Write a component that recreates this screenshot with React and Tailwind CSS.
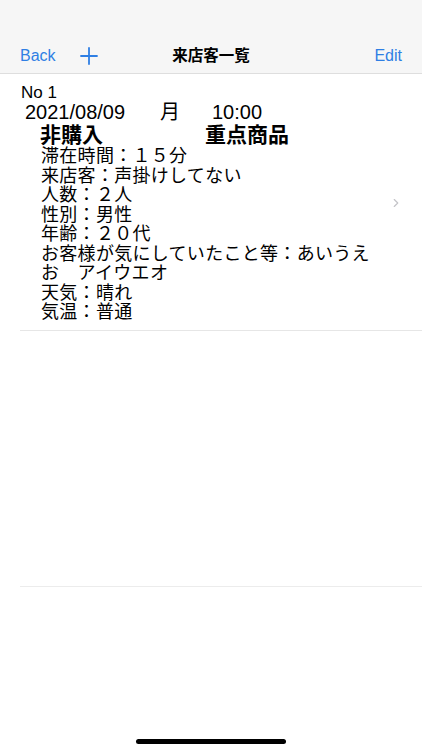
import { ChevronRight } from 'lucide-react';

const font = { fontFamily: '"Liberation Sans", "Noto Sans CJK JP", sans-serif' };

const details = [
  '滞在時間：１５分',
  '来店客：声掛けしてない',
  '人数：２人',
  '性別：男性',
  '年齢：２０代',
  'お客様が気にしていたこと等：あいうえ',
  'お　アイウエオ',
  '天気：晴れ',
  '気温：普通',
];

export default function App() {
  return (
    <div className="w-[422px] h-[750px] bg-white relative overflow-hidden text-black" style={font}>
      {/* Navigation bar */}
      <div className="h-[74px] bg-[#f6f6f6] border-b border-[#dedede] flex items-end pb-[1px] px-5">
        <div className="flex-1 flex items-center h-[32px]">
          <span className="text-[16px] text-[#2f7fe4]">Back</span>
          <svg className="ml-[24px]" width="18" height="18" viewBox="0 0 18 18">
            <path d="M9 1v16M1 9h16" stroke="#2f7fe4" strokeWidth="1.8" strokeLinecap="round" />
          </svg>
        </div>
        <div className="h-[32px] flex items-center text-[15.5px] font-bold">来店客一覧</div>
        <div className="flex-1 flex items-center justify-end h-[32px]">
          <span className="text-[16px] text-[#2f7fe4]">Edit</span>
        </div>
      </div>

      {/* Visitor row */}
      <div className="ml-5 border-b border-[#e6e6e6] flex items-center pt-[9px] pb-[7px]">
        <div className="flex-1">
          <div className="text-[17px] leading-[19px] ml-[1px]">No 1</div>
          <div className="flex text-[20px] leading-[20px] ml-[5px]">
            <span className="w-[135px]">2021/08/09</span>
            <span className="w-[52px]">月</span>
            <span>10:00</span>
          </div>
          <div className="flex text-[21px] leading-[25px] font-bold ml-[20px]">
            <span className="w-[165px]">非購入</span>
            <span>重点商品</span>
          </div>
          <div className="ml-[21px] text-[18px] leading-[19.5px] tracking-[0.3px]">
            {details.map((d) => (
              <div key={d}>{d}</div>
            ))}
          </div>
        </div>
        <ChevronRight className="mr-[19px] text-[#c4c4c8]" size={14} strokeWidth={2} />
      </div>

      {/* Empty footer area */}
      <div className="ml-5 h-[256px] border-b border-[#ececec]" />

      {/* Home indicator */}
      <div className="absolute bottom-[6px] left-[136px] w-[150px] h-[5px] rounded-full bg-black" />
    </div>
  );
}
